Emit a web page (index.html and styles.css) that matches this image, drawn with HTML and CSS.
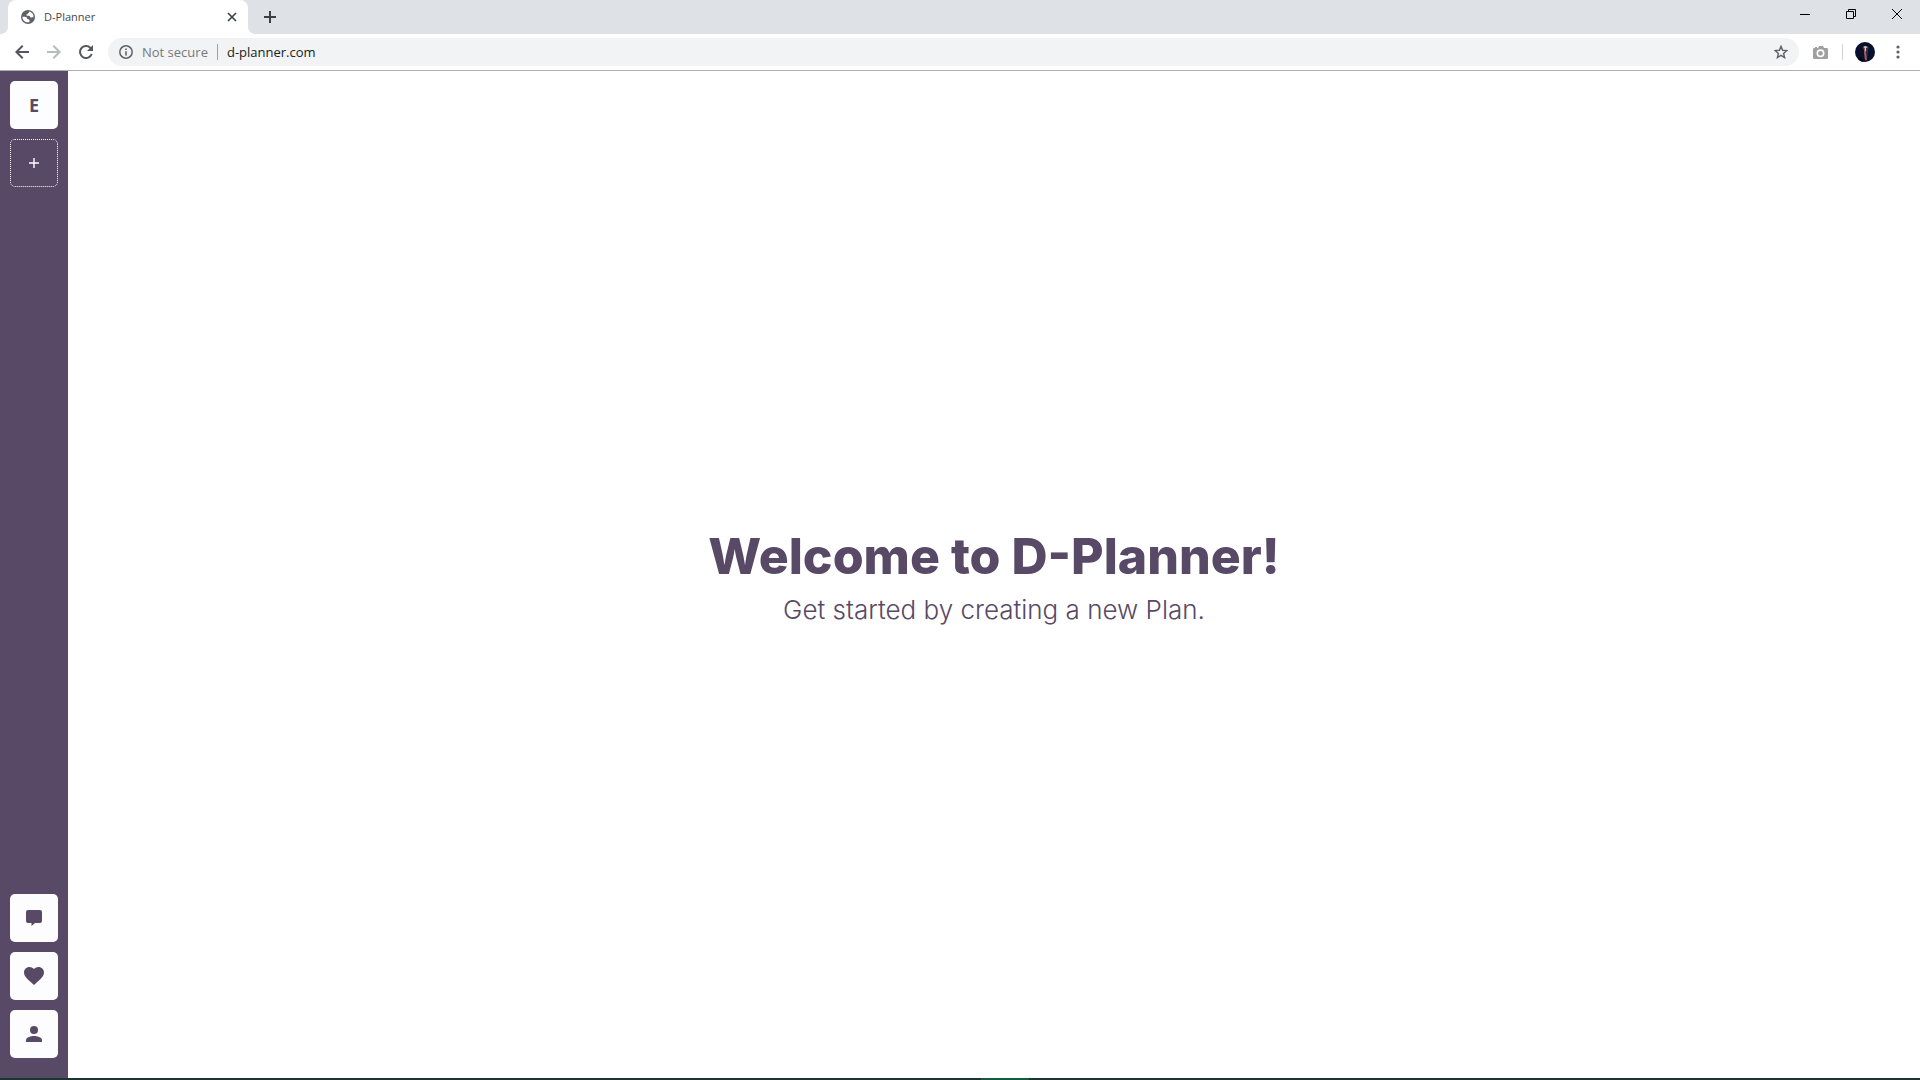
FILE: index.html
```html
<!DOCTYPE html>
<html lang="en">
<head>
<meta charset="utf-8">
<title>D-Planner</title>
<link rel="stylesheet" href="styles.css">
</head>
<body>
<header class="browser">
  <div class="tabstrip">
    <div class="tab">
      <svg class="favicon" width="14" height="14" viewBox="0 0 14 14"><circle cx="7" cy="7" r="7" fill="#5f6368"/><path d="M1.4 6.7H4c1.7 0 2.2 1 2.2 2.2 1.4 0 2.3.5 2.3 1.5v1.6C5.100 13.200 1.300 10.600 1.400 6.700zM7.900 1.500c.4.8-.2 1.500-1 1.700-.2 1-.9 1.300-1.700 1.300.2 1.300 1.200 1.400 2.300 1.300 1.300-.1 1.600.900 1.900 1.600.800.100 2.100.200 3-.3.400-3.100-1.700-5.200-4.500-5.600z" fill="#fff"/></svg>
      <span class="tab-title">D-Planner</span>
      <button class="icon-button" aria-label="Close tab"><svg width="10" height="10" viewBox="0 0 10 10"><path d="M1 1l8 8M9 1L1 9" stroke="#3c4043" stroke-width="1.6"/></svg></button>
    </div>
    <button class="icon-button new-tab" aria-label="New tab"><svg width="12" height="12" viewBox="0 0 12 12"><path d="M6 0v12M0 6h12" stroke="#3c4043" stroke-width="2"/></svg></button>
    <div class="window-controls">
      <button class="icon-button" aria-label="Minimize"><svg width="10" height="10" viewBox="0 0 10 10"><path d="M0 5.500h10" stroke="#000"/></svg></button>
      <button class="icon-button" aria-label="Restore"><svg width="10" height="10" viewBox="0 0 10 10" fill="none" stroke="#000"><path d="M.5 2.500h7v7h-7zM2.500 2.500v-2h7v7h-2"/></svg></button>
      <button class="icon-button" aria-label="Close window"><svg width="10" height="10" viewBox="0 0 10 10"><path d="M0 0l10 10M10 0L0 10" stroke="#000"/></svg></button>
    </div>
  </div>
  <nav class="toolbar" aria-label="Browser">
    <div class="history">
      <button class="icon-button" aria-label="Back"><svg width="14" height="14" viewBox="0 0 14 14" fill="none" stroke="#54575b" stroke-width="2"><path d="M14 7H1.500M7.700.700L1.400 7l6.300 6.300"/></svg></button>
      <button class="icon-button" aria-label="Forward" disabled><svg width="14" height="14" viewBox="0 0 14 14" fill="none" stroke="#b9babc" stroke-width="2"><path d="M0 7h12.500M6.300.700L12.600 7l-6.300 6.300"/></svg></button>
      <button class="icon-button" aria-label="Reload"><svg width="14" height="14" viewBox="0 0 14 14"><path d="M12.700 9A6 6 0 1 1 11.300 2.800L13 4.500" fill="none" stroke="#54575b" stroke-width="2"/><path d="M14 0v6H8z" fill="#54575b"/></svg></button>
    </div>
    <div class="omnibox">
      <svg width="14" height="14" viewBox="0 0 14 14"><circle cx="7" cy="7" r="6.200" fill="none" stroke="#5f6368" stroke-width="1.500"/><path d="M6.200 6.200h1.600v4.300H6.200zM6.200 3.500h1.600v1.600H6.200z" fill="#5f6368"/></svg>
      <label class="security" for="address">Not secure</label>
      <input class="address" id="address" type="text" value="d-planner.com">
      <button class="icon-button" aria-label="Bookmark"><svg width="14" height="14" viewBox="0 0 14 14"><path d="M7 1.300l1.600 4 4.300.3-3.300 2.800 1 4.200L7 10.300l-3.600 2.300 1-4.200L1.100 5.600l4.300-.3z" fill="none" stroke="#5f6368" stroke-width="1.400"/></svg></button>
    </div>
    <button class="icon-button camera" aria-label="Screenshot extension"><svg width="15" height="13" viewBox="0 0 15 13"><path d="M1.200 2H2V1h2v1h1L6 0h4l1 2h2.800Q15 2 15 3.200v8.600Q15 13 13.800 13H1.200Q0 13 0 11.800V3.200Q0 2 1.200 2z" fill="#a0a0a0"/><circle cx="7.500" cy="7.300" r="3.200" fill="#a0a0a0" stroke="#fff" stroke-width="1.600"/></svg></button>
    <button class="icon-button profile" aria-label="Profile"><svg width="20" height="20" viewBox="0 0 20 20"><circle cx="10" cy="10" r="10" fill="#07102f"/><path d="M7 6l3-2 4 1-1 4-1 9-2-1V9z" fill="#263353"/><path d="M10 5v6l1 7" stroke="#a8583f" stroke-width="2" fill="none"/><path d="M8 5l2-1 3 1-2 1v3h-1V6z" fill="#efc995"/><path d="M3 17l3-2 3 5q-4 0-6-3z" fill="#04050b"/></svg></button>
    <button class="icon-button" aria-label="Menu"><svg width="4" height="14" viewBox="0 0 4 14" fill="#5f6368"><circle cx="2" cy="2" r="1.600"/><circle cx="2" cy="7" r="1.600"/><circle cx="2" cy="12" r="1.600"/></svg></button>
  </nav>
</header>
<div class="app">
  <nav class="sidebar" aria-label="Plans">
    <button class="tile">E</button>
    <button class="tile tile-add" aria-label="New plan"><svg width="10" height="10" viewBox="0 0 10 10"><path d="M5 0v10M0 5h10" stroke="#fff" stroke-width="1.400"/></svg></button>
    <div class="sidebar-footer">
      <button class="tile" aria-label="Feedback"><svg width="16" height="16" viewBox="0 0 16 16"><path d="M2 0h12q2 0 2 2v9q0 2-2 2H9l-3.500 3V13H2q-2 0-2-2V2Q0 0 2 0z" fill="#584966"/></svg></button>
      <button class="tile" aria-label="Support us"><svg width="20" height="18" viewBox="0 0 20 18"><path d="M10 18L8.600 16.700C3.400 12.200 0 9.200 0 5.500 0 2.400 2.400 0 5.500 0 7.200 0 8.900.800 10 2.100 11.100.800 12.800 0 14.500 0 17.600 0 20 2.400 20 5.500c0 3.700-3.400 6.700-8.600 11.200z" fill="#584966"/></svg></button>
      <button class="tile" aria-label="Account"><svg width="16" height="16" viewBox="0 0 16 16" fill="#584966"><circle cx="8" cy="4" r="4"/><path d="M0 16v-2c0-2.700 5.300-4 8-4s8 1.300 8 4v2z"/></svg></button>
    </div>
  </nav>
  <main class="welcome">
    <h1 class="welcome-title">Welcome to D-Planner!</h1>
    <p class="welcome-text">Get started by creating a new Plan.</p>
  </main>
</div>
<footer class="taskbar"><span class="taskbar-active"></span></footer>
</body>
</html>
```
FILE: styles.css
```css
* { box-sizing: border-box; }

body {
  margin: 0;
  min-height: 100vh;
  display: flex;
  flex-direction: column;
  background: #fff;
  color: #584966;
  font-family: Inter, sans-serif;
}

button, input { font: inherit; }
svg { display: block; flex: none; }

.icon-button {
  display: flex;
  flex: none;
  align-items: center;
  justify-content: center;
  padding: 0;
  border: 0;
  background: none;
}

.browser {
  border-bottom: 1px solid #b0b0b0;
  font-family: "Open Sans", sans-serif;
}

.tabstrip {
  display: flex;
  height: 34px;
  padding-left: 8px;
  background: #dee1e6;
}

.tab {
  position: relative;
  display: flex;
  align-items: center;
  gap: 9px;
  width: 240px;
  padding: 0 11px 0 13px;
  border-radius: 8px 8px 0 0;
  background: #fff;
}

.tab::before,
.tab::after {
  content: "";
  position: absolute;
  bottom: 0;
  width: 8px;
  height: 8px;
}

.tab::before {
  right: 100%;
  background: radial-gradient(circle at 0 0, #dee1e6 8px, #fff 8px);
}

.tab::after {
  left: 100%;
  background: radial-gradient(circle at 100% 0, #dee1e6 8px, #fff 8px);
}

.tab-title {
  flex: 1;
  color: #45494d;
  font-size: 11px;
  line-height: 16px;
  padding-bottom: 1px;
}

.new-tab { width: 28px; margin-left: 8px; }

.window-controls {
  display: flex;
  height: 28px;
  margin-left: auto;
}

.window-controls .icon-button { width: 46px; }

.toolbar {
  display: flex;
  align-items: center;
  height: 36px;
  padding-right: 20px;
}

.history {
  display: flex;
  gap: 18px;
  padding: 0 15px;
}

.omnibox {
  display: flex;
  flex: 1;
  align-items: center;
  height: 28px;
  padding: 0 11px;
  border-radius: 14px;
  background: #f1f3f4;
  font-size: 13px;
}

.security {
  margin: 0 9px 0 9px;
  color: #77797d;
}

.address {
  flex: 1;
  min-width: 0;
  height: 16px;
  padding: 0 0 0 9px;
  border: 0;
  border-left: 1px solid #9aa0a6;
  background: none;
  color: #202124;
}

.camera { margin: 0 14px; }

.profile {
  height: 20px;
  padding-left: 12px;
  margin-right: 21px;
}

.profile::before {
  content: "";
  width: 1px;
  height: 16px;
  margin: 0 12px 0 -12px;
  background: #cfd1d4;
}

.app {
  display: flex;
  flex: 1;
}

.sidebar {
  display: flex;
  flex-direction: column;
  gap: 10px;
  padding: 10px 10px 20px;
  background: #584966;
}

.sidebar-footer {
  display: flex;
  flex-direction: column;
  gap: 10px;
  margin-top: auto;
}

.tile {
  display: flex;
  align-items: center;
  justify-content: center;
  width: 48px;
  height: 48px;
  padding: 0;
  border: 0;
  border-radius: 5px;
  background: #fdfdff;
  color: #584966;
  font-family: "Noto Sans", sans-serif;
  font-size: 18px;
  font-weight: 700;
}

.tile-add {
  border: 1px dotted #fff;
  background: none;
}

.welcome {
  display: flex;
  flex: 1;
  flex-direction: column;
  align-items: center;
  justify-content: center;
  padding-bottom: 2px;
}

.welcome-title {
  margin: 0;
  font-size: 50px;
  font-weight: 800;
  line-height: 72px;
}

.welcome-text {
  margin: 0;
  font-size: 26px;
  font-weight: 300;
  line-height: 36px;
}

.taskbar {
  display: flex;
  justify-content: center;
  height: 2px;
  background: #1d3530;
}

.taskbar-active {
  width: 48px;
  margin-left: 90px;
  background: #135c3e;
}
```
